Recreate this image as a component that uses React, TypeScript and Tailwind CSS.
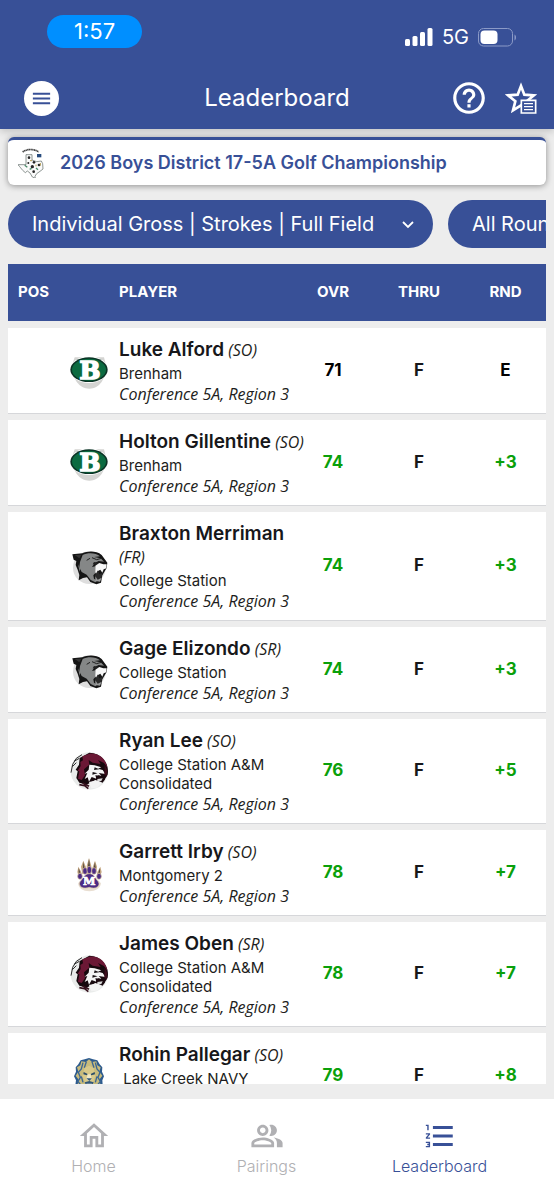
import { useState } from 'react';
import type { ReactElement } from 'react';
import { MdFormatListNumbered, MdHelpOutline, MdMenu, MdOutlineHome, MdOutlinePeopleAlt } from 'react-icons/md';

type School = 'brenham' | 'collegeStation' | 'consolidated' | 'montgomery' | 'lakeCreek';

interface Player {
  name: string;
  year: string;
  school: School;
  ovr: string;
  thru: string;
  rnd: string;
}

const schoolNames: Record<School, string> = {
  brenham: 'Brenham',
  collegeStation: 'College Station',
  consolidated: 'College Station A&M Consolidated',
  montgomery: 'Montgomery 2',
  lakeCreek: '\u00a0Lake Creek NAVY',
};

const players: Player[] = [
  { name: 'Luke Alford', year: 'SO', school: 'brenham', ovr: '71', thru: 'F', rnd: 'E' },
  { name: 'Holton Gillentine', year: 'SO', school: 'brenham', ovr: '74', thru: 'F', rnd: '+3' },
  { name: 'Braxton Merriman', year: 'FR', school: 'collegeStation', ovr: '74', thru: 'F', rnd: '+3' },
  { name: 'Gage Elizondo', year: 'SR', school: 'collegeStation', ovr: '74', thru: 'F', rnd: '+3' },
  { name: 'Ryan Lee', year: 'SO', school: 'consolidated', ovr: '76', thru: 'F', rnd: '+5' },
  { name: 'Garrett Irby', year: 'SO', school: 'montgomery', ovr: '78', thru: 'F', rnd: '+7' },
  { name: 'James Oben', year: 'SR', school: 'consolidated', ovr: '78', thru: 'F', rnd: '+7' },
  { name: 'Rohin Pallegar', year: 'SO', school: 'lakeCreek', ovr: '79', thru: 'F', rnd: '+8' },
];

function BrenhamLogo() {
  return (
    <svg viewBox="0 0 114 114" className="block size-[38px]" aria-hidden="true">
      <path d="M14 16h88l6 24c0 42-20 70-50 70S6 82 6 40z" fill="#d4d4d2" />
      <ellipse cx="57" cy="53" rx="57" ry="40" fill="#fff" />
      <ellipse cx="57" cy="53" rx="56" ry="37" fill="#0b3325" />
      <ellipse cx="57" cy="53" rx="51" ry="33" fill="#0b6b41" />
      <text x="60" y="80" textAnchor="middle" fontSize="74" fontWeight="700" fill="#fff" stroke="#fff" strokeWidth="5" className="font-['DejaVu_Serif',serif]">
        B
      </text>
    </svg>
  );
}

function PantherLogo() {
  return (
    <svg viewBox="0 0 114 114" className="block size-[38px]" aria-hidden="true">
      <circle cx="58" cy="62" r="49" fill="#dedede" />
      <path d="M7 22l30-3c14-7 42-9 58 5l17 23-2 16-5 8-8 14-4 22-14 5-18-7-10-14-12 2-13 7 2-16-5-16-6-14 2-12-8-4z" fill="#151515" />
      <path d="M38 24c14-8 40-8 52 4l-18 2 20 4 10 10-16-2-12 6-8 12 10-2 2 18-8 9 2 10 10 6-6 5-14-7-12-16-15-8-7-14 2-16z" fill="#858787" />
      <path d="M14 24l20-1-6 11z" fill="#333" />
      <path d="M24 52l7 14-2 8z" fill="#858787" />
      <path d="M72 45l18 4-8 5-14-2z" fill="#222" />
      <path d="M76 56l12-8 12 4 10 0-1 12-8 3-4 10-6-9-8 5-2 15-5-12z" fill="#f7f7f7" />
      <path d="M84 70l4 12 10-4-4 16-12 4-8-12z" fill="#2a2a2a" />
      <path d="M76 88l7 10 12-6-5 12-14-2z" fill="#9a9b9b" />
      <path d="M66 32l14 6 14-4M50 40l10-6" stroke="#222" strokeWidth="3" fill="none" />
    </svg>
  );
}

function TigerLogo() {
  return (
    <svg viewBox="0 0 114 114" className="block size-[38px]" aria-hidden="true">
      <circle cx="58" cy="57" r="56" fill="#e9ebea" />
      <path d="M58 2a56 56 0 0 1 55 66L98 92 76 84 50 98 28 92l-9-14 4-20-6-5 10-15 2-20z" fill="#17090e" />
      <path d="M58 5c30-3 50 16 54 42l-10-14-18-9 8 12-24-4-12-8 2 14-16 14 3 18-10 14-11-4 4-22-5-2 9-14-1-12 8-5-2-12z" fill="#6b1835" />
      <path d="M3 62l5-25 11-18 17-11M7 44l12-12M12 28l16-9" stroke="#2c2c2c" strokeWidth="3" fill="none" />
      <path d="M58 38l16 2 20 6-10 4 14 4 8 12-20-3 8 8-18-1 3 10-14-5-8 14-4-13-9 5 8-18-8 2 12-12z" fill="#f5f5f5" />
      <path d="M74 46l14 6-16 2zM68 60l15 4-16 4z" fill="#171114" />
      <path d="M78 76l8-6 10 4 10-6-2 16-9 7-17-2z" fill="#19080e" />
      <path d="M82 81l16-2-4 8-11 2z" fill="#d9d9d9" />
      <path d="M104 38l8 16-2 20-7-7z" fill="#3b0c1b" />
      <path d="M57 90l24-5 15 7-14 15-18 2z" fill="#f3f3f3" />
      <path d="M28 98l16 3 11 9M38 93l19 10" stroke="#35101c" strokeWidth="5" fill="none" />
    </svg>
  );
}

function PawLogo() {
  return (
    <svg viewBox="0 0 114 114" className="block size-[38px]" aria-hidden="true">
      <path d="M24 88c10-10 18-24 34-26 18 2 26 16 35 26-2 16-16 24-35 24S26 104 24 88z" fill="#e9dfd2" />
      <g fill="#c4a57f">
        <path d="M57 12l7 24-1 24H52l-2-24zM40 20l9 22v18H37l-4-22zM75 20l6 18-3 22H67V42zM25 38l9 16 2 16-10-2-4-14zM91 38l4 16-5 14-9 2 1-16z" />
      </g>
      <g fill="#50483f">
        <path d="M57 14l3 22h-6zM40 23l4 20h-5zM75 23l2 20h-6zM26 42l5 14h-5zM90 42v14h-5z" />
      </g>
      <g fill="#4c2b84" stroke="#d9c5a4" strokeWidth="2">
        <ellipse cx="45" cy="51" rx="7" ry="10" />
        <ellipse cx="58" cy="48" rx="7" ry="11" />
        <ellipse cx="72" cy="51" rx="7" ry="10" />
        <ellipse cx="30" cy="67" rx="7" ry="9" />
        <ellipse cx="87" cy="67" rx="7" ry="9" />
        <path d="M58 59c15 0 18 15 27 24 8 14-9 24-27 17-18 7-35-3-28-17 9-9 13-24 28-24z" />
      </g>
      <text x="58" y="94" textAnchor="middle" fontSize="34" fontWeight="700" fill="#fff" stroke="#fff" strokeWidth="2" className="font-['DejaVu_Serif',serif]">
        M
      </text>
    </svg>
  );
}

function LionLogo() {
  return (
    <svg viewBox="0 0 114 114" className="block size-[38px]" aria-hidden="true">
      <path d="M57 3l12 4 13 3 7 12 8 9-1 13 6 14-5 12 1 14-10 13-13 8-18 7-18-7-13-8-10-13 2-14-6-12 6-14-1-13 8-9 7-12 12-3z" fill="#2d5b8e" />
      <path d="M57 7l9 8 13-2 3 12 10 6-4 13 9 12-8 11 2 17-12 8-8 10-14 4-14-4-9-10-11-8 2-17-8-11 8-12-4-13 10-6 3-12 14 2z" fill="#c8bb7c" />
      <path d="M39 17l-5 19-9 10 6 15-7 12 12 16M76 17l5 19 9 10-6 15 7 12-12 16M49 14l-6 18M66 14l6 18M34 58l5 18M81 58l-5 18" stroke="#3b6693" strokeWidth="4" fill="none" />
      <path d="M44 33l13-7 14 7 5 24-8 21-11 9-11-9-9-21z" fill="#d8c98a" />
      <path d="M41 45l12 6-2 4-11-3zM74 45l-12 6 2 4 11-3z" fill="#294b68" />
      <path d="M53 52h9l3 14-8 6-8-6z" fill="#efe7c4" />
      <path d="M49 64h17l-8 8zM44 76l14-4 13 4-6 12H50z" fill="#335879" />
      <path d="M49 80h17l-5 6h-8z" fill="#f1eee2" />
    </svg>
  );
}

const logos: Record<School, ReactElement> = {
  brenham: <BrenhamLogo />,
  collegeStation: <PantherLogo />,
  consolidated: <TigerLogo />,
  montgomery: <PawLogo />,
  lakeCreek: <LionLogo />,
};

function TexasLogo() {
  return (
    <svg viewBox="0 0 78 90" className="h-[30px] w-[26px]" aria-hidden="true">
      <path d="M14 12c14-10 34-10 48 0" stroke="#444" strokeWidth="5" strokeDasharray="4 1" fill="none" />
      <path d="M24 20h18v16l14 5 14-2 4 8 1 16-9 7-10 7-5 8 1 6-9-4-7-12-8-6-6 5-8-7-9-11-5-6h24z" fill="#fafafa" stroke="#58645f" strokeWidth="2" />
      <path d="M57 18h13v10H57z" fill="#274b7d" />
      <g fill="#252525">
        <circle cx="33" cy="29" r="4" />
        <circle cx="48" cy="43" r="4" />
        <circle cx="31" cy="45" r="3" />
        <circle cx="43" cy="56" r="5" />
        <circle cx="63" cy="51" r="4" />
        <circle cx="47" cy="71" r="4" />
      </g>
      <path d="M20 52l8 6M54 60l6 5M35 64l6-3" stroke="#4a8a68" strokeWidth="4" />
      <path d="M67 45v8M54 50v5M36 38h6" stroke="#b29a4d" strokeWidth="3" />
    </svg>
  );
}

function FavoritesIcon() {
  return (
    <svg viewBox="0 0 96 96" className="size-8" fill="none" aria-hidden="true">
      <path d="M48 12l10 26 29 2-22 18 7 27-24-15-24 15 7-27L9 40l29-2z" stroke="#fff" strokeWidth="8" />
      <path d="M49 55h43v38H49z" fill="#385097" stroke="#fff" strokeWidth="5" />
      <path d="M57 65h27M57 74h27M57 83h27" stroke="#fff" strokeWidth="4" />
    </svg>
  );
}

function StatusBar() {
  return (
    <div className="flex items-start justify-between pt-[15px] pr-[37px] pl-[47px]">
      <div className="rounded-full bg-[#008fff] px-[27px] text-[22px] leading-[33px]">1:57</div>
      <div className="flex items-center gap-[9px] pt-[9px]">
        <svg viewBox="0 0 28 18" className="h-[18px] w-7" fill="#fff" aria-hidden="true">
          <rect x="0" y="11" width="5" height="7" rx="1.5" />
          <rect x="7.5" y="8" width="5" height="10" rx="1.5" />
          <rect x="15" y="4" width="5" height="14" rx="1.5" />
          <rect x="22.5" y="0" width="5" height="18" rx="1.5" />
        </svg>
        <span className="text-[20px] leading-[26px]">5G</span>
        <svg viewBox="0 0 39 19" className="h-[19px] w-[39px]" aria-hidden="true">
          <rect x="0.5" y="0.5" width="34" height="17.5" rx="5" fill="none" stroke="#8b9ac7" />
          <rect x="2.5" y="2.5" width="17" height="13.5" rx="4" fill="#fff" />
          <path d="M36.5 6.5v6c2-1 2-5 0-6z" fill="#8b9ac7" />
        </svg>
      </div>
    </div>
  );
}

function FilterSelect({ label, options }: { label: string; options: string[] }) {
  return (
    <div className="relative shrink-0">
      <select
        aria-label={label}
        className="h-12 appearance-none rounded-full bg-[#385097] pr-[58px] pl-6 text-[20px] text-white"
      >
        {options.map((option) => (
          <option key={option}>{option}</option>
        ))}
      </select>
      <svg viewBox="0 0 12 8" className="pointer-events-none absolute top-[21px] right-[19px] h-2 w-3" fill="none" aria-hidden="true">
        <path d="M1 1l5 5 5-5" stroke="#fff" strokeWidth="1.8" />
      </svg>
    </div>
  );
}

function PlayerRow({ player }: { player: Player }) {
  const scoreColor = player.rnd.startsWith('+') ? 'text-[#0aa00a]' : 'text-black';

  return (
    <tr className="bg-white text-center text-[17px] font-bold shadow-[0_1px_0_#d6d7da]">
      <td></td>
      <td>{logos[player.school]}</td>
      <td className="pt-[10px] pb-[9px] text-left font-normal text-[#1d1d20]">
        <div className="mb-[3px] text-[19px] leading-[23px]">
          <span className="font-semibold text-[#17171a]">{player.name}</span>
          <span className="font-['Open_Sans',sans-serif] text-[16px] leading-none italic"> ({player.year})</span>
        </div>
        <div className="text-[15px] leading-[19px]">{schoolNames[player.school]}</div>
        <div className="mt-px font-['Open_Sans',sans-serif] text-[16px] leading-[20px] italic">Conference 5A, Region 3</div>
      </td>
      <td className={scoreColor}>{player.ovr}</td>
      <td className="text-[#17171a]">{player.thru}</td>
      <td className={`pr-[15px] ${scoreColor}`}>{player.rnd}</td>
    </tr>
  );
}

const tabs = [
  { name: 'Home', icon: MdOutlineHome },
  { name: 'Pairings', icon: MdOutlinePeopleAlt },
  { name: 'Leaderboard', icon: MdFormatListNumbered },
];

export default function App() {
  const [activeTab, setActiveTab] = useState('Leaderboard');

  return (
    <div className="flex h-screen flex-col bg-[#ededed] font-['Inter',sans-serif]">
      <header className="bg-[#385097] pb-[10px] text-white shadow-[0_2px_8px_rgba(0,0,0,0.2)]">
        <StatusBar />
        <div className="mt-[27px] grid grid-cols-[1fr_auto_1fr] items-center px-[17px]">
          <button className="ml-[7px] flex size-[35px] items-center justify-center rounded-full bg-white text-[#385097]" aria-label="Menu">
            <MdMenu className="size-[23px]" />
          </button>
          <h1 className="text-[24px] leading-[42px]">Leaderboard</h1>
          <div className="flex items-center justify-end gap-[17px]">
            <button aria-label="Help">
              <MdHelpOutline className="size-[38px]" />
            </button>
            <button aria-label="Favorites">
              <FavoritesIcon />
            </button>
          </div>
        </div>
      </header>

      <main className="flex min-h-0 flex-1 flex-col px-2 pt-2 pb-[15px]">
        <section className="flex h-12 shrink-0 items-center gap-4 rounded-md border-t-[3px] border-[#385097] bg-white px-[10px] shadow-[0_1px_6px_rgba(0,0,0,0.4)]">
          <TexasLogo />
          <h2 className="text-[18px] font-semibold text-[#385097]">2026 Boys District 17-5A Golf Championship</h2>
        </section>

        <div className="mt-[15px] flex shrink-0 gap-[15px] overflow-hidden">
          <FilterSelect label="Leaderboard type" options={['Individual Gross | Strokes | Full Field']} />
          <FilterSelect label="Round" options={['All Rounds']} />
        </div>

        <div className="mt-[9px] min-h-0 flex-1 overflow-hidden">
          <table className="w-full table-fixed border-separate border-spacing-x-0 border-spacing-y-[7px]">
            <thead>
              <tr className="h-[57px] bg-[#385097] text-[15px] text-white">
                <th className="w-[62px] pl-[10px] text-left">POS</th>
                <th className="w-[49px]" aria-label="School"></th>
                <th className="text-left">PLAYER</th>
                <th className="w-[50px]">OVR</th>
                <th className="w-[122px]">THRU</th>
                <th className="w-[66px] pr-[15px]">RND</th>
              </tr>
            </thead>
            <tbody>
              {players.map((player) => (
                <PlayerRow key={player.name} player={player} />
              ))}
            </tbody>
          </table>
        </div>
      </main>

      <nav className="grid h-[100px] shrink-0 grid-cols-3 bg-white pt-5 pr-7 pl-[7px]">
        {tabs.map(({ name, icon: Icon }) => (
          <button
            key={name}
            onClick={() => setActiveTab(name)}
            className={`flex flex-col items-center self-start ${activeTab === name ? 'text-[#385097]' : 'text-[#b0b0b3]'}`}
          >
            <Icon className="size-[34px]" />
            <span className="mt-[3px] text-[16px] leading-5 font-light">{name}</span>
          </button>
        ))}
      </nav>
    </div>
  );
}
